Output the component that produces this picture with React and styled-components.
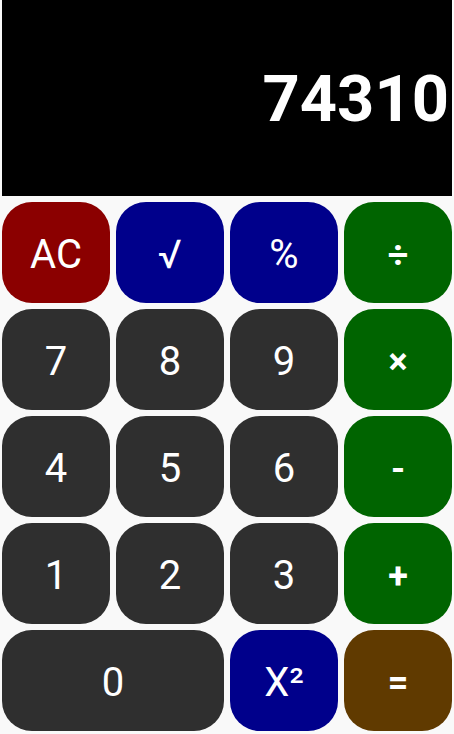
import React from 'react'
import styled, { createGlobalStyle } from 'styled-components'

const GlobalStyle = createGlobalStyle`
  html, body {
    margin: 0;
    padding: 0;
    background: #f9f9f9;
    font-family: Roboto, 'Noto Sans', sans-serif;
  }
`

const colors = {
  gray: '#2f2f2f',
  red: '#8b0000',
  blue: '#00008b',
  green: '#006400',
  brown: '#603a00',
}

const Screen = styled.div`
  width: 454px;
  height: 734px;
  padding: 0 2px;
  box-sizing: border-box;
  background: #f9f9f9;
`

const Display = styled.div`
  height: 196px;
  background: #000;
  color: #fff;
  display: flex;
  align-items: center;
  justify-content: flex-end;
  padding: 2px 3px 0 0;
  box-sizing: border-box;
  font-size: 65px;
  font-weight: 700;
`

const Keypad = styled.div`
  display: grid;
  grid-template-columns: repeat(4, 108px);
  grid-auto-rows: 101px;
  gap: 6px;
  margin-top: 6px;
`

const Key = styled.button`
  border: none;
  border-radius: 30px;
  background: ${props => colors[props.$tone || 'gray']};
  color: #fff;
  font-family: Roboto, 'Noto Sans', sans-serif;
  font-size: ${props => (props.$op ? '36px' : '40px')};
  font-weight: ${props => (props.$op ? 700 : 400)};
  grid-column: span ${props => props.$span || 1};
  display: flex;
  align-items: center;
  justify-content: center;
  padding: 4px 0 0;
`

const keys = [
  { label: 'AC', tone: 'red' },
  { label: '√', tone: 'blue' },
  { label: '%', tone: 'blue' },
  { label: '÷', tone: 'green', op: true },
  { label: '7' },
  { label: '8' },
  { label: '9' },
  { label: '×', tone: 'green', op: true },
  { label: '4' },
  { label: '5' },
  { label: '6' },
  { label: '-', tone: 'green', op: true },
  { label: '1' },
  { label: '2' },
  { label: '3' },
  { label: '+', tone: 'green', op: true },
  { label: '0', span: 2 },
  { label: 'X²', tone: 'blue' },
  { label: '=', tone: 'brown', op: true },
]

const App = () => {
  return (
    <Screen>
      <GlobalStyle />
      <Display>74310</Display>
      <Keypad>
        {keys.map(k => (
          <Key key={k.label} $tone={k.tone} $op={k.op} $span={k.span}>
            {k.label}
          </Key>
        ))}
      </Keypad>
    </Screen>
  )
}

export default App
